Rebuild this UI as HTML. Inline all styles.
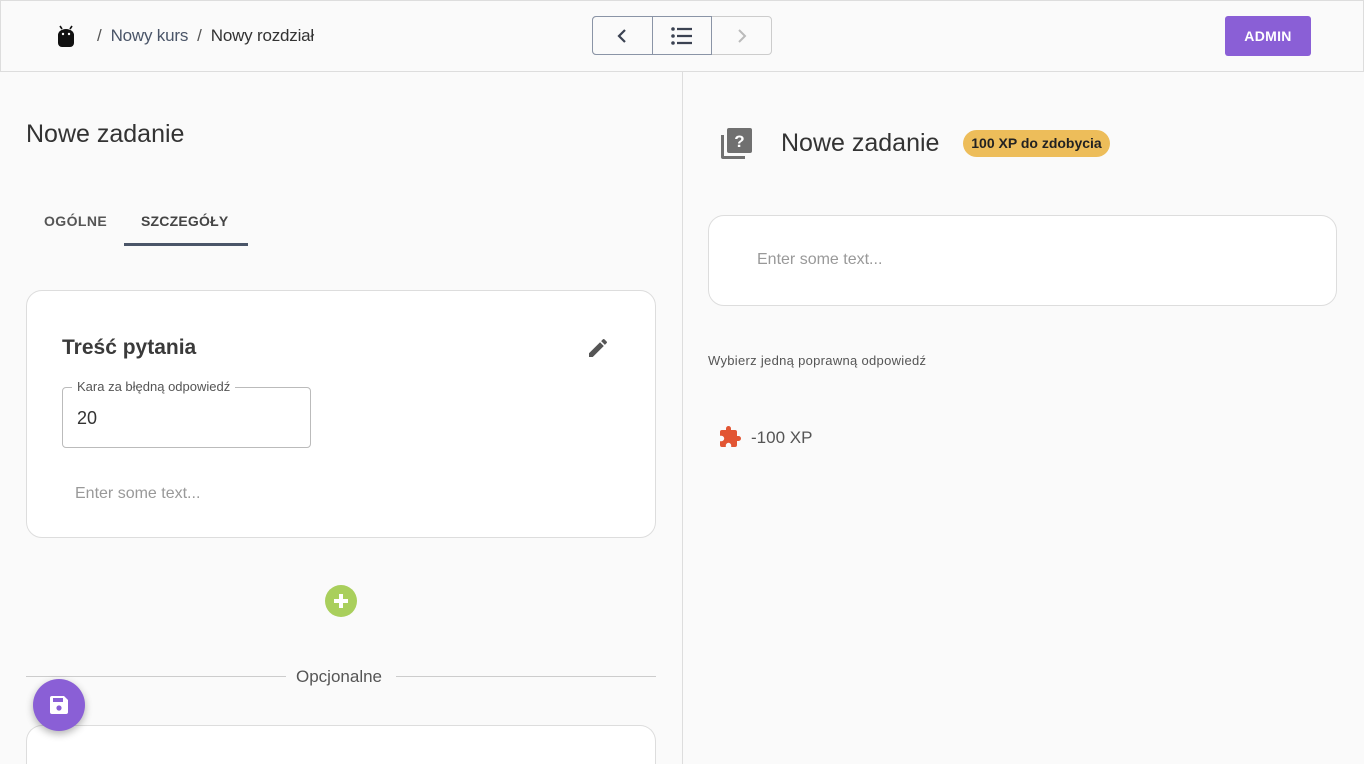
<!DOCTYPE html>
<html style="width:1364px;height:764px;overflow:hidden"><head><meta charset="utf-8"><style>
*{box-sizing:border-box;margin:0;padding:0}
body{width:1364px;height:764px;overflow:hidden;background:#fafafa;font-family:"Liberation Sans",sans-serif;color:#333;position:relative}
.a{position:absolute}
</style></head><body>
<div class="a" style="left:0;top:0;width:1364px;height:72px;border:1px solid #ddd;background:#fafafa"></div>
<svg class="a" style="left:56px;top:24px" width="20" height="24" viewBox="0 0 20 24"><path d="M4 2l2 3M16 2l-2 3" stroke="#111" stroke-width="1.6"/><path d="M2 11a8 6 0 0 1 16 0v8a4 4 0 0 1-4 4H6a4 4 0 0 1-4-4z" fill="#111"/><circle cx="7" cy="10" r="1.2" fill="#fff"/><circle cx="13" cy="10" r="1.2" fill="#fff"/></svg>
<div class="a" style="left:97px;top:26px;font-size:17px;color:#555;letter-spacing:-.2px">/&nbsp;&nbsp;<span style="color:#4a5568">Nowy kurs</span>&nbsp;&nbsp;/&nbsp;&nbsp;<span style="color:#333">Nowy rozdział</span></div>
<div class="a" style="left:592px;top:16px;width:180px;height:39px;border:1px solid #ccc;border-radius:4px"></div>
<div class="a" style="left:592px;top:16px;width:120px;height:39px;border:1px solid #8a94a6;border-radius:4px 0 0 4px"></div>
<div class="a" style="left:652px;top:16px;width:1px;height:39px;background:#8a94a6"></div>
<svg class="a" style="left:612px;top:26px" width="20" height="20"><path d="M13 4l-6 6 6 6" stroke="#3b4252" stroke-width="2.2" fill="none"/></svg>
<svg class="a" style="left:670px;top:26px" width="24" height="20"><circle cx="3" cy="3" r="1.8" fill="#3b4252"/><circle cx="3" cy="10" r="1.8" fill="#3b4252"/><circle cx="3" cy="17" r="1.8" fill="#3b4252"/><path d="M7 3h15M7 10h15M7 17h15" stroke="#3b4252" stroke-width="2.2"/></svg>
<svg class="a" style="left:732px;top:26px" width="20" height="20"><path d="M7 4l6 6-6 6" stroke="#bbb" stroke-width="2" fill="none"/></svg>
<div class="a" style="left:1225px;top:16px;width:86px;height:40px;background:#8a5fd6;border-radius:3px;color:#fff;font-size:14px;font-weight:bold;text-align:center;line-height:40px;letter-spacing:.3px">ADMIN</div>
<div class="a" style="left:682px;top:72px;width:1px;height:692px;background:#ddd"></div>

<div class="a" style="left:26px;top:120px;font-size:25px;color:#333">Nowe zadanie</div>
<div class="a" style="left:44px;top:213px;font-size:14px;font-weight:bold;color:#555;letter-spacing:.4px">OGÓLNE</div>
<div class="a" style="left:141px;top:213px;font-size:14px;font-weight:bold;color:#444;letter-spacing:.2px">SZCZEGÓŁY</div>
<div class="a" style="left:124px;top:243px;width:124px;height:3px;background:#4a5568"></div>

<div class="a" style="left:26px;top:290px;width:630px;height:248px;background:#fff;border:1px solid #ddd;border-radius:16px"></div>
<div class="a" style="left:62px;top:336px;font-size:21px;font-weight:bold;color:#3a3a3a">Treść pytania</div>
<svg class="a" style="left:586px;top:336px" width="24" height="24" viewBox="0 0 24 24"><path d="M3 17.25V21h3.75L17.81 9.94l-3.75-3.75L3 17.25zM20.71 7.04a1 1 0 0 0 0-1.41l-2.34-2.34a1 1 0 0 0-1.41 0l-1.83 1.83 3.75 3.75 1.83-1.83z" fill="#555"/></svg>
<div class="a" style="left:62px;top:387px;width:249px;height:61px;border:1px solid #bbb;border-radius:4px"></div>
<div class="a" style="left:72px;top:379px;padding:0 5px;background:#fff;font-size:13px;color:#555">Kara za błędną odpowiedź</div>
<div class="a" style="left:77px;top:408px;font-size:18px;color:#333">20</div>
<div class="a" style="left:75px;top:485px;font-size:16px;color:#999">Enter some text...</div>

<div class="a" style="left:325px;top:585px;width:32px;height:32px;border-radius:50%;background:#a9cf5c"></div>
<div class="a" style="left:334px;top:599px;width:14px;height:4px;background:#fff"></div>
<div class="a" style="left:339px;top:594px;width:4px;height:14px;background:#fff"></div>

<div class="a" style="left:26px;top:676px;width:260px;height:1px;background:#ccc"></div>
<div class="a" style="left:396px;top:676px;width:260px;height:1px;background:#ccc"></div>
<div class="a" style="left:296px;top:667px;font-size:17px;color:#555">Opcjonalne</div>
<div class="a" style="left:26px;top:725px;width:630px;height:39px;background:#fff;border:1px solid #ddd;border-bottom:none;border-radius:16px 16px 0 0"></div>
<div class="a" style="left:33px;top:679px;width:52px;height:52px;border-radius:50%;background:#8a5fd6;box-shadow:0 3px 8px rgba(0,0,0,.3)"></div>
<svg class="a" style="left:49px;top:695px" width="20" height="20" viewBox="0 0 20 20"><path d="M1 3a2 2 0 0 1 2-2h12l4 4v12a2 2 0 0 1-2 2H3a2 2 0 0 1-2-2z" fill="#fff"/><rect x="4" y="3" width="10" height="4" fill="#8a5fd6"/><circle cx="10" cy="13" r="2.6" fill="#8a5fd6"/></svg>

<svg class="a" style="left:719px;top:127px" width="34" height="34" viewBox="0 0 34 34"><path d="M2 8v22a2 2 0 0 0 2 2h22v-3H5V8z" fill="#707070"/><rect x="8" y="1" width="25" height="25" rx="2" fill="#707070"/><text x="20.5" y="20" font-family="Liberation Sans" font-weight="bold" font-size="17" fill="#fff" text-anchor="middle">?</text></svg>
<div class="a" style="left:781px;top:129px;font-size:25px;color:#333">Nowe zadanie</div>
<div class="a" style="left:963px;top:130px;width:147px;height:27px;border-radius:14px;background:#edbd5a;font-size:14px;font-weight:bold;color:#222;text-align:center;line-height:27px">100 XP do zdobycia</div>
<div class="a" style="left:708px;top:215px;width:629px;height:91px;background:#fff;border:1px solid #ddd;border-radius:16px"></div>
<div class="a" style="left:757px;top:251px;font-size:16px;color:#999">Enter some text...</div>
<div class="a" style="left:708px;top:353px;font-size:13px;color:#555;letter-spacing:.3px">Wybierz jedną poprawną odpowiedź</div>
<svg class="a" style="left:718px;top:425px" width="24" height="24" viewBox="0 0 24 24"><path d="M20.5 11H19V7a2 2 0 0 0-2-2h-4V3.5a2.5 2.5 0 0 0-5 0V5H4a2 2 0 0 0-2 2v3.8h1.5a2.7 2.7 0 0 1 0 5.4H2V20a2 2 0 0 0 2 2h3.8v-1.5a2.7 2.7 0 0 1 5.4 0V22H17a2 2 0 0 0 2-2v-4h1.5a2.5 2.5 0 0 0 0-5z" fill="#e25533"/></svg>
<div class="a" style="left:751px;top:428px;font-size:17px;color:#555">-100 XP</div>
</body></html>
